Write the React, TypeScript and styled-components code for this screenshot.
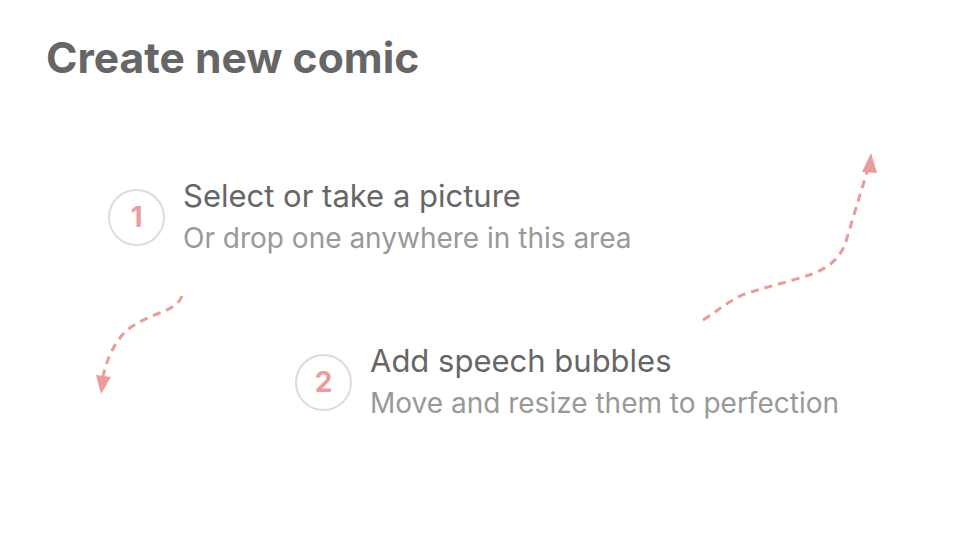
import React from 'react'
import styled, { createGlobalStyle } from 'styled-components'

const GlobalStyle = createGlobalStyle`
  html, body {
    margin: 0;
    padding: 0;
    background: #ffffff;
  }
  body {
    font-family: Inter, "Noto Sans", sans-serif;
  }
`

const Page = styled.div`
  position: relative;
  width: 960px;
  height: 540px;
  overflow: hidden;
  background: #ffffff;
  padding: 34px 0 0 46px;
  box-sizing: border-box;
`

const Title = styled.h1`
  margin: 0;
  font-size: 42.6px;
  line-height: 48px;
  font-weight: 700;
  color: #666666;
`

const Steps = styled.div`
  display: flex;
  flex-direction: column;
`

const Step = styled.div<{ indent: number; top: number }>`
  display: flex;
  align-items: center;
  gap: 18px;
  margin-left: ${({ indent }) => indent}px;
  margin-top: ${({ top }) => top}px;
`

const Circle = styled.div`
  width: 53px;
  height: 53px;
  border: 2.5px solid #dcdcdc;
  border-radius: 50%;
  display: flex;
  align-items: center;
  justify-content: center;
  font-size: 28px;
  font-weight: 700;
  color: #ec9c9c;
  flex-shrink: 0;
`

const Texts = styled.div`
  display: flex;
  flex-direction: column;
`

const StepTitle = styled.div`
  font-size: 31px;
  line-height: 42px;
  color: #666666;
`

const StepSub = styled.div`
  font-size: 28px;
  line-height: 42px;
  color: #999999;
`

const Arrows = styled.svg`
  position: absolute;
  left: 0;
  top: 0;
  pointer-events: none;
`

const ARROW = '#ec9a9a'

export default function App() {
  return (
    <>
      <GlobalStyle />
      <Page>
        <Title>Create new comic</Title>
        <Steps>
          <Step indent={62} top={93}>
            <Circle>1</Circle>
            <Texts>
              <StepTitle>Select or take a picture</StepTitle>
              <StepSub>Or drop one anywhere in this area</StepSub>
            </Texts>
          </Step>
          <Step indent={249} top={81}>
            <Circle>2</Circle>
            <Texts>
              <StepTitle>Add speech bubbles</StepTitle>
              <StepSub>Move and resize them to perfection</StepSub>
            </Texts>
          </Step>
        </Steps>
        <Arrows width="960" height="540" viewBox="0 0 960 540">
          <path
            d="M182 296 C178 306 168 310 157 314 C140 321 126 328 120 338 C112 348 107 360 103 376"
            fill="none"
            stroke={ARROW}
            strokeWidth="3"
            strokeDasharray="8 6"
          />
          <polygon points="96,375 111,377 101,394" fill={ARROW} />
          <path
            d="M703 320 C716 312 726 303 740 296 C760 288 790 282 812 274 C832 266 842 256 847 238 C853 218 860 195 867 172"
            fill="none"
            stroke={ARROW}
            strokeWidth="3"
            strokeDasharray="8 6"
          />
          <polygon points="862,172 877,173 871,153" fill={ARROW} />
        </Arrows>
      </Page>
    </>
  )
}
